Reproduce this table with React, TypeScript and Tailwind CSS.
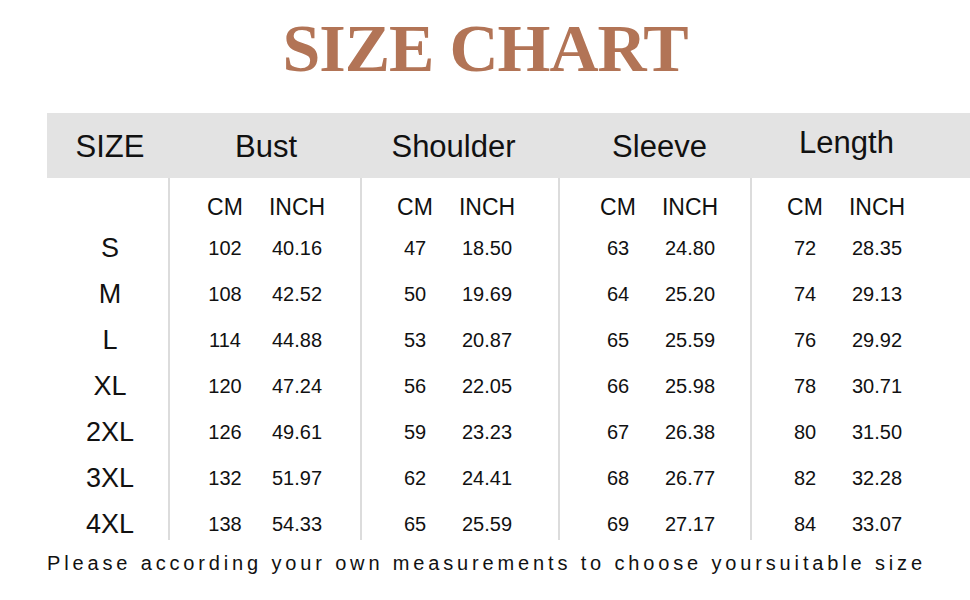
import React from "react";

const rows: [string, string, string, string, string, string, string, string, string][] = [
  ["S", "102", "40.16", "47", "18.50", "63", "24.80", "72", "28.35"],
  ["M", "108", "42.52", "50", "19.69", "64", "25.20", "74", "29.13"],
  ["L", "114", "44.88", "53", "20.87", "65", "25.59", "76", "29.92"],
  ["XL", "120", "47.24", "56", "22.05", "66", "25.98", "78", "30.71"],
  ["2XL", "126", "49.61", "59", "23.23", "67", "26.38", "80", "31.50"],
  ["3XL", "132", "51.97", "62", "24.41", "68", "26.77", "82", "32.28"],
  ["4XL", "138", "54.33", "65", "25.59", "69", "27.17", "84", "33.07"],
];

const groupPad = ["pl-[19px]", "pl-[17px]", "pl-[22px]", "pl-[17px]"];

const GRID = "grid grid-cols-[121px_192px_198px_192px_173px]";

export default function App() {
  return (
    <div
      className="w-[970px] h-[600px] bg-white text-[#111] overflow-hidden"
      style={{ fontFamily: '"Liberation Sans", Arial, sans-serif' }}
    >
      <div className="pt-[14px] h-[113px]">
        <div
          className="h-[68px] flex items-center justify-center text-[68px] leading-none font-bold text-[#b27456] tracking-[-1px]"
          style={{ fontFamily: '"Liberation Serif", "Times New Roman", serif' }}
        >
          SIZE CHART
        </div>
      </div>

      <div className="pl-[47px]">
        <div className={`${GRID} h-[65px] bg-[#e3e3e3] text-[31px] leading-none`}>
          <div className="flex items-center justify-center translate-x-[2.5px] translate-y-[1px]">SIZE</div>
          <div className="flex items-center justify-center translate-x-[2px] translate-y-[1px]">Bust</div>
          <div className="flex items-center justify-center -translate-x-[5.5px] translate-y-[1px]">Shoulder</div>
          <div className="flex items-center justify-center translate-x-[5.5px] translate-y-[1px]">Sleeve</div>
          <div className="flex items-center justify-center translate-x-[10px] -translate-y-[3px]">Length</div>
        </div>

        <div className={`${GRID} h-[47px]`}>
          <div />
          {groupPad.map((p, i) => (
            <div key={i} className="h-full border-l-2 border-[#dcdcdc] pt-[11px]">
              <div className={`flex h-[36px] items-center ${p} text-[23px] leading-none`}>
                <span className="w-[72px] text-center">CM</span>
                <span className="w-[72px] text-center">INCH</span>
              </div>
            </div>
          ))}
        </div>

        {rows.map((r, idx) => {
          const last = idx === rows.length - 1;
          return (
            <div key={r[0]} className={`${GRID} ${last ? "h-[39px]" : "h-[46px]"}`}>
              <div className={`flex items-center justify-center pl-[5px] text-[27px] leading-none ${last ? "pt-[7px]" : ""}`}>
                {r[0]}
              </div>
              {[0, 1, 2, 3].map((g) => (
                <div key={g} className={`h-full border-l-2 border-[#dcdcdc] ${last ? "pt-[7px]" : ""}`}>
                  <div className={`flex h-full items-center ${groupPad[g]} text-[20px] leading-none`}>
                    <span className="w-[72px] text-center">{r[1 + g * 2]}</span>
                    <span className="w-[72px] text-center">{r[2 + g * 2]}</span>
                  </div>
                </div>
              ))}
            </div>
          );
        })}
      </div>

      <div className="mt-[13px] h-[20px] pl-[47px] flex items-center text-[20px] leading-none tracking-[3.85px] whitespace-nowrap">
        Please according your own measurements to choose yoursuitable size
      </div>
    </div>
  );
}
